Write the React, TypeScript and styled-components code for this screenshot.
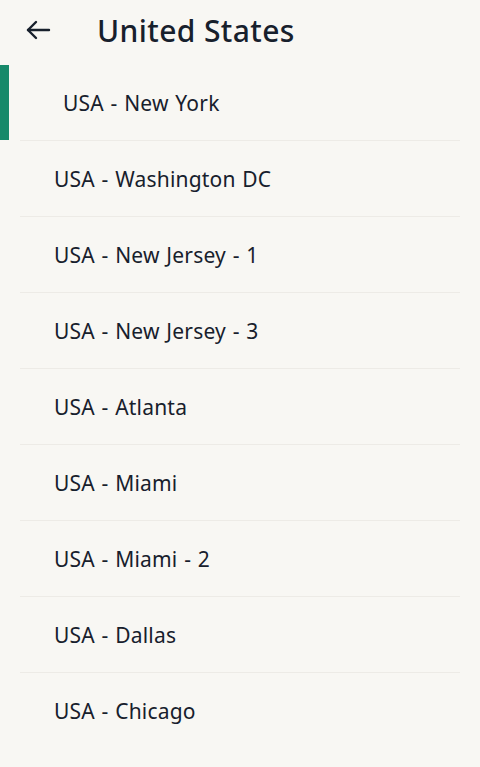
import { createGlobalStyle } from 'styled-components'
import styled from 'styled-components'

const GlobalStyle = createGlobalStyle`
  html, body {
    margin: 0;
    padding: 0;
    background: #f8f7f3;
  }
  body {
    font-family: 'Noto Sans', 'Liberation Sans', sans-serif;
    color: #17202c;
  }
`

const Page = styled.div`
	width: 480px;
	height: 767px;
	overflow: hidden;
	background: #f8f7f3;
`

const Header = styled.header`
	height: 65px;
	display: flex;
	align-items: center;
	padding: 0 0 5px 24px;
	box-sizing: border-box;
`

const BackButton = styled.button`
	width: 28px;
	height: 28px;
	padding: 0;
	border: none;
	background: none;
	display: flex;
	align-items: center;
	justify-content: center;
	color: #17202c;
	margin-right: 45px;
`

const Title = styled.h1`
	margin: 0;
	font-size: 30px;
	font-weight: 500;
	letter-spacing: 0.4px;
`

const List = styled.ul`
	list-style: none;
	margin: 0;
	padding: 0;
`

const Row = styled.li<{ $active?: boolean }>`
	position: relative;
	height: 76px;
	display: flex;
	align-items: center;
	margin: 0 20px;
	padding-left: ${p => (p.$active ? '43px' : '34px')};
	font-size: 21px;
	letter-spacing: 0.2px;
	word-spacing: 1px;
	border-bottom: 1px solid #edebe6;
	box-sizing: border-box;

	&:last-child {
		border-bottom: none;
	}
`

const Indicator = styled.span`
	position: absolute;
	left: -20px;
	top: 0;
	bottom: 0;
	width: 9px;
	background: #17896a;
`

const cities = [
	'USA - New York',
	'USA - Washington DC',
	'USA - New Jersey - 1',
	'USA - New Jersey - 3',
	'USA - Atlanta',
	'USA - Miami',
	'USA - Miami - 2',
	'USA - Dallas',
	'USA - Chicago',
]

export default function App() {
	return (
		<Page>
			<GlobalStyle />
			<Header>
				<BackButton aria-label="Back">
					<svg width="26" height="22" viewBox="0 0 26 22" fill="none" stroke="currentColor" strokeWidth="2.4" strokeLinecap="round" strokeLinejoin="round">
						<path d="M24 11H3" />
						<path d="M11 3L3 11L11 19" />
					</svg>
				</BackButton>
				<Title>United States</Title>
			</Header>
			<List>
				{cities.map((city, i) => (
					<Row key={city} $active={i === 0}>
						{i === 0 && <Indicator />}
						{city}
					</Row>
				))}
			</List>
		</Page>
	)
}
